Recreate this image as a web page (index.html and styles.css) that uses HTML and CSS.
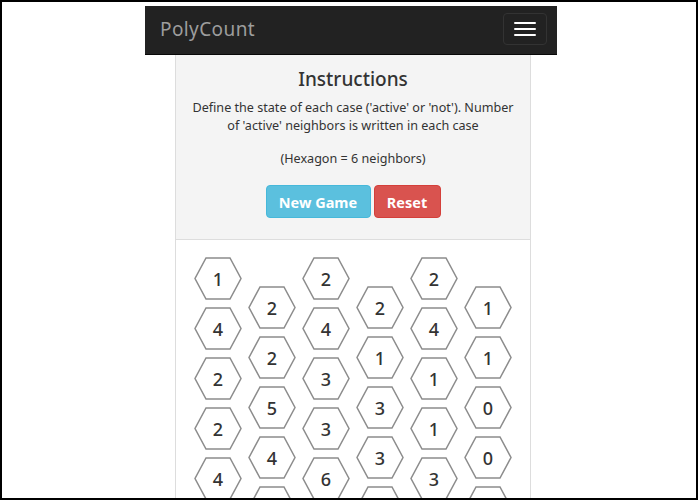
FILE: index.html
```html
<!DOCTYPE html>
<html lang="en">
<head>
<meta charset="utf-8">
<title>PolyCount</title>
<link rel="stylesheet" href="styles.css">
</head>
<body>
<div class="frame">
  <div class="page">
    <nav class="navbar">
      <span class="brand">PolyCount</span>
      <button class="toggle" type="button" aria-label="Menu">
        <span class="bar"></span><span class="bar"></span><span class="bar"></span>
      </button>
    </nav>
    <div class="panel">
      <div class="well">
        <h1 class="title">Instructions</h1>
        <p class="text">Define the state of each case ('active' or 'not'). Number of 'active' neighbors is written in each case</p>
        <p class="text note">(Hexagon = 6 neighbors)</p>
        <div class="actions">
          <button class="btn btn-info" type="button">New Game</button>
          <button class="btn btn-danger" type="button">Reset</button>
        </div>
      </div>
      <div class="board" id="board"></div>
    </div>
  </div>
</div>
<script src="app.js"></script>
</body>
</html>
```

FILE: styles.css
```css
* { box-sizing: border-box; }
html, body { margin: 0; padding: 0; background: #fff; }
body { font-family: "Noto Sans", "DejaVu Sans", sans-serif; color: #333; }
.frame {
  height: 500px;
  border: 2px solid #000;
  overflow: hidden;
  background: #fff;
}
.page {
  width: 412px;
  margin-left: 143px;
  padding-top: 4px;
}
.navbar {
  height: 49px;
  background: #222;
  border-bottom: 1px solid #080808;
  display: flex;
  align-items: center;
  justify-content: space-between;
  padding: 0 10px 0 15px;
}
.brand {
  font-size: 19px;
  color: #9d9d9d;
  letter-spacing: 0.4px;
  margin-top: -2px;
}
.toggle {
  width: 44px;
  height: 32px;
  margin-top: -2px;
  border: 1px solid #333;
  border-radius: 4px;
  background: #222;
  display: flex;
  flex-direction: column;
  align-items: center;
  justify-content: center;
  gap: 4px;
  padding: 0;
}
.bar {
  display: block;
  width: 22px;
  height: 2px;
  background: #fff;
  border-radius: 1px;
}
.panel {
  width: 356px;
  margin-left: 30px;
  border-left: 1px solid #ddd;
  border-right: 1px solid #ddd;
}
.well {
  background: #f4f4f4;
  border-bottom: 1px solid #ddd;
  padding: 12px 13px 21px;
  text-align: center;
}
.title {
  margin: 0;
  font-size: 19px;
  font-weight: 500;
  line-height: 24px;
  color: #333;
}
.text {
  margin: 8px 0 0;
  font-size: 12.6px;
  line-height: 18px;
  color: #333;
}
.note { margin-top: 15px; }
.actions {
  margin-top: 17px;
  display: flex;
  justify-content: center;
  gap: 3px;
}
.btn {
  height: 33px;
  border: 1px solid transparent;
  border-radius: 4px;
  color: #fff;
  font-family: inherit;
  font-size: 14.5px;
  font-weight: 700;
  padding: 0;
}
.btn-info { background: #5bc0de; border-color: #46b8da; width: 105px; }
.btn-danger { background: #d9534f; border-color: #d43f3a; width: 67px; }
.board {
  display: flex;
  justify-content: center;
  gap: 6px;
  padding-top: 17px;
}
.col {
  display: flex;
  flex-direction: column;
  gap: 7px;
}
.col.odd { padding-top: 29px; }
.hex {
  display: grid;
  width: 48px;
  height: 43px;
}
.hex > * { grid-area: 1 / 1; }
.hex svg { width: 48px; height: 43px; }
.hex polygon { fill: #fff; stroke: #8c8c8c; stroke-width: 1.5; }
.hex .num {
  align-self: center;
  justify-self: center;
  font-size: 18px;
  font-weight: 500;
  line-height: 1;
  color: #333;
}
```

FILE: app.js
```js
const cols = [
  [1, 4, 2, 2, 4],
  [2, 2, 5, 4, ''],
  [2, 4, 3, 3, 6],
  [2, 1, 3, 3, ''],
  [2, 4, 1, 1, 3],
  [1, 1, 0, 0, '']
];
const board = document.getElementById('board');
cols.forEach((values, i) => {
  const col = document.createElement('div');
  col.className = 'col' + (i % 2 ? ' odd' : '');
  values.forEach(v => {
    const hex = document.createElement('div');
    hex.className = 'hex';
    hex.innerHTML = '<svg viewBox="0 0 48 43"><polygon points="12,1 36,1 47,21.5 36,42 12,42 1,21.5"/></svg><span class="num">' + v + '</span>';
    col.appendChild(hex);
  });
  board.appendChild(col);
});
```
